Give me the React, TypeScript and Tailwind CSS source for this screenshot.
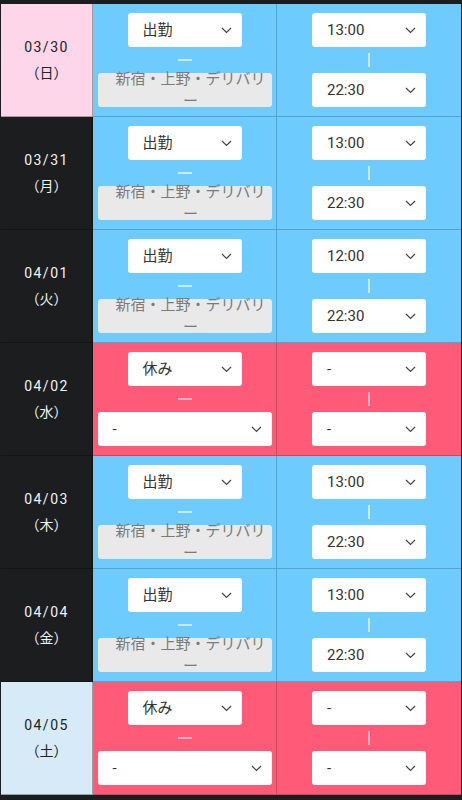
import React from 'react';

type Day = {
  date: string;
  dow: string;
  kind: 'sun' | 'sat' | 'week';
  work: boolean;
  start?: string;
  end?: string;
};

const days: Day[] = [
  { date: '03/30', dow: '日', kind: 'sun', work: true, start: '13:00', end: '22:30' },
  { date: '03/31', dow: '月', kind: 'week', work: true, start: '13:00', end: '22:30' },
  { date: '04/01', dow: '火', kind: 'week', work: true, start: '12:00', end: '22:30' },
  { date: '04/02', dow: '水', kind: 'week', work: false },
  { date: '04/03', dow: '木', kind: 'week', work: true, start: '13:00', end: '22:30' },
  { date: '04/04', dow: '金', kind: 'week', work: true, start: '13:00', end: '22:30' },
  { date: '04/05', dow: '土', kind: 'sat', work: false },
];

const Chevron = () => (
  <svg width="11" height="7" viewBox="0 0 11 7" fill="none" className="shrink-0">
    <path d="M1 1l4.5 4.5L10 1" stroke="#444" strokeWidth="1.2" />
  </svg>
);

const Select: React.FC<{ value: string; wide?: boolean }> = ({ value, wide }) => (
  <div
    className={`flex items-center justify-between h-[34px] bg-white rounded-[3px] pl-[15px] pr-[10px] text-[15px] text-[#333] ${
      wide ? 'w-[174px]' : 'w-[114px]'
    }`}
  >
    <span>{value}</span>
    <Chevron />
  </div>
);

const DateCell: React.FC<{ d: Day }> = ({ d }) => {
  const bg =
    d.kind === 'sun'
      ? 'bg-[#fdd6ea] text-[#222]'
      : d.kind === 'sat'
      ? 'bg-[#d7eaf8] text-[#222]'
      : 'bg-[#1b1d1f] text-[#f2f2f2]';
  return (
    <div className={`${bg} flex flex-col items-center justify-center gap-[6px] text-[14px] border-r border-b border-black/30`}>
      <span className="tracking-[1.5px] leading-[20px]">{d.date}</span>
      <span className="leading-[20px]">（{d.dow}）</span>
    </div>
  );
};

export default function App() {
  return (
    <div
      className="min-h-screen bg-[#1b1d1f] pt-[4px] pl-px"
      style={{ fontFamily: 'Roboto, "Noto Sans CJK JP", sans-serif' }}
    >
      <div className="grid grid-cols-[92px_184px_184px] auto-rows-[113px] w-[460px]">
        {days.map((d) => {
          const bg = d.work ? 'bg-[#6ecbfd]' : 'bg-[#ff5a78]';
          const mark = d.work ? 'bg-[#c6ebff]' : 'bg-[#ffb4c2]';
          return (
            <React.Fragment key={d.date}>
              <DateCell d={d} />
              <div className={`${bg} border-r border-b border-black/20 flex flex-col items-center pt-[9px]`}>
                <Select value={d.work ? '出勤' : '休み'} />
                <div className={`h-[26px] flex items-center`}>
                  <div className={`${mark} w-[14px] h-[1.5px]`} />
                </div>
                {d.work ? (
                  <div className="w-[174px] h-[34px] bg-[#e9e9e9] rounded-[3px] flex items-center justify-center pl-[16px] pr-[4px] text-[15px] leading-[22px] text-[#7a7a7a] text-center">
                    新宿・上野・デリバリー
                  </div>
                ) : (
                  <Select value="-" wide />
                )}
              </div>
              <div className={`${bg} border-b border-black/20 flex flex-col items-center pt-[9px]`}>
                <Select value={d.start ?? '-'} />
                <div className="h-[26px] flex items-center">
                  <div className={`${mark} w-[1.5px] h-[14px]`} />
                </div>
                <Select value={d.end ?? '-'} />
              </div>
            </React.Fragment>
          );
        })}
      </div>
    </div>
  );
}
